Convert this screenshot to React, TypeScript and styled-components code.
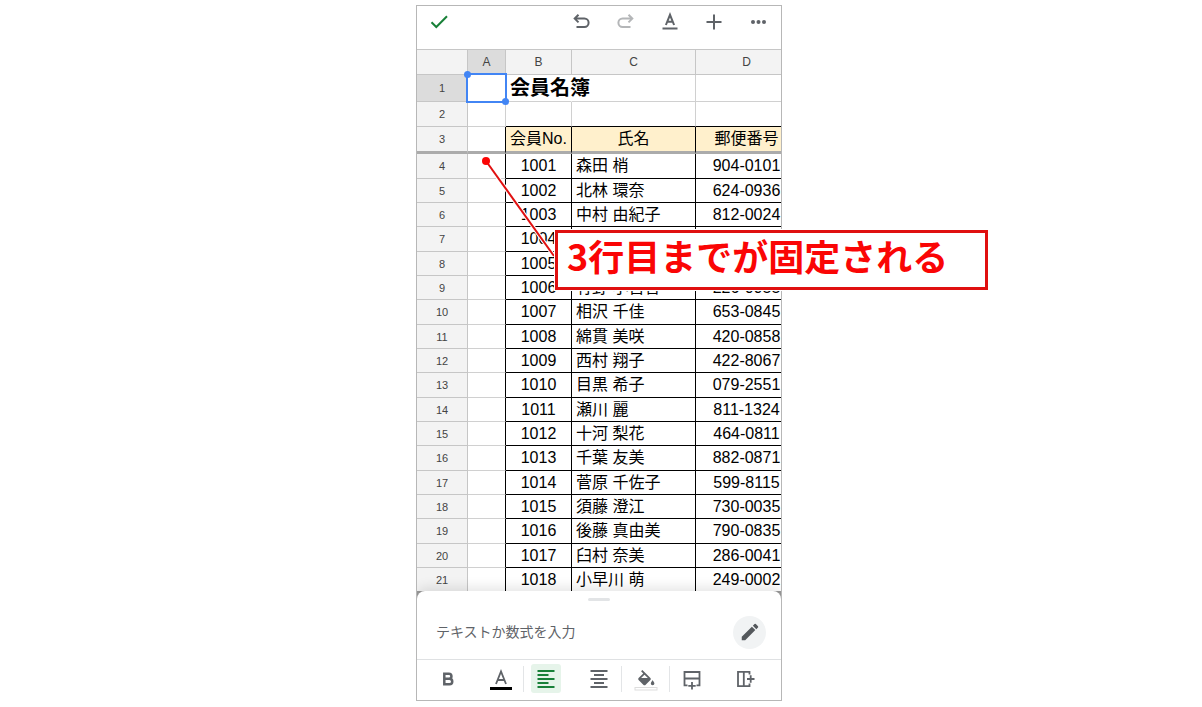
import React from "react";
import styled, { createGlobalStyle, css } from "styled-components";

const latin = `"Liberation Sans", "Noto Sans CJK JP", sans-serif`;

const GlobalStyle = createGlobalStyle`
  *, *::before, *::after { box-sizing: border-box; }
  body { margin: 0; background: #fff; font-family: ${latin}; }
  button, input { font: inherit; margin: 0; padding: 0; border: 0; background: none; }
  button { cursor: pointer; display: grid; place-items: center; }
`;

const Page = styled.main`
  display: flex;
  justify-content: center;
  padding: 5px 8px 6px 4px;
`;

const Phone = styled.section`
  position: relative;
  display: flex;
  flex-direction: column;
  width: 100%;
  max-width: 366px;
  border: 1px solid #b7b7b7;
  background: #fff;
`;

const Toolbar = styled.header`
  display: flex;
  align-items: flex-start;
  justify-content: space-between;
  height: 43px;
  padding: 4px 11px 4px 10px;
`;

const ToolGroup = styled.div`
  display: flex;
  gap: 20px;
`;

const ToolButton = styled.button<{ $color?: string }>`
  width: 24px;
  height: 24px;
  color: ${(p) => p.$color ?? "#5f6368"};
`;

const GridArea = styled.div`
  overflow: hidden;
  height: 542px;
`;

const Table = styled.table`
  table-layout: fixed;
  width: 381px;
  border-collapse: separate;
  border-spacing: 0;
  color: #000;
  font-size: 16px;
  line-height: 20px;
`;

const Col = styled.col<{ $width: number }>`
  width: ${(p) => p.$width}px;
`;

const headStyle = css<{ $active?: boolean }>`
  padding: 0;
  border: solid #c6c6c6;
  background: ${(p) => (p.$active ? "#dcdcdc" : "#f3f3f3")};
  color: #444;
  font-weight: 400;
`;

const ColumnHead = styled.th<{ $active?: boolean }>`
  ${headStyle}
  height: 26px;
  border-width: 1px 1px 1px 0;
  font-size: 12px;
`;

const RowHead = styled.th<{ $active?: boolean }>`
  ${headStyle}
  border-width: 0 1px 1px 0;
  font-size: 11px;
`;

const Cell = styled.td<{ $ruled?: boolean; $edge?: boolean; $align?: string; $open?: boolean }>`
  padding: 0 0 0 4px;
  white-space: nowrap;
  text-align: ${(p) => p.$align ?? "left"};
  border: solid #d0d0d0;
  border-width: 0 1px 1px 0;
  ${(p) => p.$align === "center" && css`padding: 0;`}
  ${(p) => p.$ruled && css`border-color: #000;`}
  ${(p) => p.$edge && css`border-right-color: #000;`}
  ${(p) => p.$open && css`border-right-color: transparent;`}
`;

const RuledTop = styled(Cell)`
  border-bottom-color: #000;
`;

const TitleCell = styled(Cell)`
  font-size: 20px;
  font-weight: 700;
  line-height: 24px;
`;

const LabelCell = styled(Cell)`
  background: #fff0cc;
`;

const SelectedCell = styled(Cell)`
  position: relative;
`;

const Selection = styled.span`
  position: absolute;
  inset: -2px;
  border: 2px solid #4285f4;
  &::before, &::after {
    content: "";
    position: absolute;
    width: 7px;
    height: 7px;
    border-radius: 50%;
    background: #4285f4;
  }
  &::before { top: -4px; left: -4px; }
  &::after { right: -4px; bottom: -4px; }
`;

const Row = styled.tr<{ $height: number }>`
  height: ${(p) => p.$height}px;
`;

const FrozenRow = styled(Row)`
  & > * {
    border-bottom: 3px solid #ababab;
  }
`;

const SheetBacking = styled.div`
  background: linear-gradient(#fff, #fff) bottom / 100% 98px no-repeat, #9a9a9a;
`;

const Sheet = styled.div`
  border-radius: 8px 8px 0 0;
  background: #fff;
  box-shadow: 0 -4px 12px rgba(0, 0, 0, 0.1);
  clip-path: inset(-20px 0 0 0);
`;

const Grip = styled.div`
  width: 22px;
  height: 3px;
  margin: 0 auto;
  border-radius: 2px;
  background: #e2e4e6;
`;

const SheetTop = styled.div`
  padding-top: 7px;
`;

const Entry = styled.form`
  display: flex;
  align-items: center;
  height: 58px;
  padding: 4px 15px 0 19px;
`;

const EntryInput = styled.input`
  flex: 1;
  min-width: 0;
  color: #5f6368;
  font-size: 14px;
  outline: 0;
  &::placeholder { color: #5f6368; opacity: 1; }
`;

const EditButton = styled.button`
  width: 33px;
  height: 33px;
  border-radius: 50%;
  background: #f1f3f4;
  color: #54585c;
`;

const FormatBar = styled.div`
  display: flex;
  align-items: center;
  height: 41px;
  padding: 0 14px 3px 9px;
  border-top: 1px solid #dfe1e3;
`;

const FormatGroup = styled.div<{ $grow?: boolean }>`
  display: flex;
  justify-content: center;
  flex: ${(p) => (p.$grow ? "1" : "none")};
  gap: 23px;
  padding: 0 7px;
`;

const FormatButton = styled.button<{ $active?: boolean }>`
  width: 30px;
  height: 29px;
  border-radius: 3px;
  color: ${(p) => (p.$active ? "#188038" : "#5f6368")};
  background: ${(p) => (p.$active ? "#e6f4ea" : "transparent")};
`;

const Divider = styled.span`
  width: 1px;
  height: 26px;
  background: #e3e5e7;
`;

const Pointer = styled.svg`
  position: absolute;
  left: 60px;
  top: 147px;
  overflow: visible;
  pointer-events: none;
`;

const Callout = styled.p`
  position: absolute;
  left: 138px;
  top: 224px;
  width: 433px;
  height: 60px;
  margin: 0;
  padding-left: 9px;
  border: 3px solid #e01010;
  outline: 1px solid #fff;
  background: #fff;
  color: #fa0505;
  font: 700 36px/44px "Noto Sans CJK JP", sans-serif;
  white-space: nowrap;
`;

const members: [string, string, string][] = [
  ["1001", "森田 梢", "904-0101"],
  ["1002", "北林 環奈", "624-0936"],
  ["1003", "中村 由紀子", "812-0024"],
  ["1004", "", ""],
  ["1005", "", ""],
  ["1006", "竹野 小百合", "226-0055"],
  ["1007", "相沢 千佳", "653-0845"],
  ["1008", "綿貫 美咲", "420-0858"],
  ["1009", "西村 翔子", "422-8067"],
  ["1010", "目黒 希子", "079-2551"],
  ["1011", "瀬川 麗", "811-1324"],
  ["1012", "十河 梨花", "464-0811"],
  ["1013", "千葉 友美", "882-0871"],
  ["1014", "菅原 千佐子", "599-8115"],
  ["1015", "須藤 澄江", "730-0035"],
  ["1016", "後藤 真由美", "790-0835"],
  ["1017", "臼村 奈美", "286-0041"],
  ["1018", "小早川 萌", "249-0002"],
];

function AlignIcon({ center }: { center?: boolean }) {
  return (
    <svg width="18" height="18" viewBox="0 0 18 18" fill="none" stroke="currentColor" strokeWidth="2" aria-hidden="true">
      <path d="M.5 1h17M.5 9h17M.5 17h17" />
      <path d={center ? "M4 5h10M4 13h10" : "M.5 5h11M.5 13h11"} />
    </svg>
  );
}

function LineIcon({ d, weight = 2 }: { d: string; weight?: number }) {
  return (
    <svg width="24" height="24" viewBox="0 0 24 24" fill="none" stroke="currentColor" strokeWidth={weight} aria-hidden="true">
      <path d={d} />
    </svg>
  );
}

export default function App() {
  return (
    <>
      <GlobalStyle />
      <Page>
        <Phone>
          <Toolbar>
            <ToolButton $color="#188038" aria-label="完了">
              <LineIcon d="M4.5 12.2l4.800 4.800L20 6.300" />
            </ToolButton>
            <ToolGroup>
              <ToolButton aria-label="元に戻す">
                <LineIcon d="M8.500 4.800L4.700 8.600l3.800 3.800M5 8.600h9.400a4.200 4.200 0 0 1 0 8.400H6.500" />
              </ToolButton>
              <ToolButton $color="#b4b6b8" aria-label="やり直す">
                <LineIcon d="M14.500 4.800l3.800 3.800-3.800 3.800M18 8.600H8.600a4.200 4.200 0 0 0 0 8.400h7.900" />
              </ToolButton>
              <ToolButton aria-label="書式">
                <LineIcon d="M7.900 15L12 4.800 16.100 15M9.200 11.800h5.600M4.500 18.500h15" />
              </ToolButton>
              <ToolButton aria-label="挿入">
                <LineIcon d="M12 4.500v15M4.500 12h15" />
              </ToolButton>
              <ToolButton aria-label="その他">
                <svg width="24" height="24" viewBox="0 0 24 24" fill="currentColor">
                  <circle cx="7" cy="12" r="2" />
                  <circle cx="12.5" cy="12" r="2" />
                  <circle cx="18" cy="12" r="2" />
                </svg>
              </ToolButton>
            </ToolGroup>
          </Toolbar>

          <GridArea>
            <Table>
              <colgroup>
                <Col $width={51} />
                <Col $width={38} />
                <Col $width={66} />
                <Col $width={124} />
                <Col $width={102} />
              </colgroup>
              <thead>
                <tr>
                  <ColumnHead />
                  <ColumnHead $active>A</ColumnHead>
                  <ColumnHead>B</ColumnHead>
                  <ColumnHead>C</ColumnHead>
                  <ColumnHead>D</ColumnHead>
                </tr>
              </thead>
              <tbody>
                <Row $height={27}>
                  <RowHead $active>1</RowHead>
                  <SelectedCell><Selection /></SelectedCell>
                  <TitleCell $open>会員名簿</TitleCell>
                  <Cell />
                  <Cell />
                </Row>
                <Row $height={25}>
                  <RowHead>2</RowHead>
                  <Cell />
                  <RuledTop />
                  <RuledTop />
                  <RuledTop />
                </Row>
                <FrozenRow $height={27}>
                  <RowHead>3</RowHead>
                  <Cell $edge />
                  <LabelCell $ruled $align="center">会員No.</LabelCell>
                  <LabelCell $ruled $align="center">氏名</LabelCell>
                  <LabelCell $ruled $align="center">郵便番号</LabelCell>
                </FrozenRow>
                {members.map(([no, name, zip], i) => (
                  <Row key={no} $height={i % 3 === 0 ? 25 : 24}>
                    <RowHead>{i + 4}</RowHead>
                    <Cell $edge />
                    <Cell $ruled $align="center">{no}</Cell>
                    <Cell $ruled>{name}</Cell>
                    <Cell $ruled $align="center">{zip}</Cell>
                  </Row>
                ))}
              </tbody>
            </Table>
          </GridArea>

          <SheetBacking>
            <Sheet>
              <SheetTop><Grip /></SheetTop>
              <Entry>
                <EntryInput aria-label="セルの内容" placeholder="テキストか数式を入力" />
                <EditButton type="button" aria-label="編集">
                  <svg width="22" height="22" viewBox="0 0 24 24" fill="currentColor">
                    <path d="M3 17.250V21h3.750L17.810 9.940l-3.750-3.750L3 17.250zM20.710 7.040a1 1 0 0 0 0-1.410l-2.340-2.340a1 1 0 0 0-1.410 0l-1.830 1.830 3.750 3.750 1.830-1.830z" />
                  </svg>
                </EditButton>
              </Entry>
              <FormatBar>
                <FormatGroup>
                  <FormatButton aria-label="太字">
                    <LineIcon weight={2.5} d="M8.300 6.700h4.600a2.500 2.500 0 0 1 0 5.100H8.300zM8.300 11.800h5.200a2.750 2.750 0 0 1 0 5.500H8.300z" />
                  </FormatButton>
                  <FormatButton aria-label="文字色">
                    <svg width="24" height="24" viewBox="0 0 24 24" fill="none" stroke="currentColor" strokeWidth="1.8">
                      <path d="M7 17L12 4.500 17 17M8.700 13h6.600" />
                      <path d="M1 21.500h22" stroke="#000" strokeWidth="3" />
                    </svg>
                  </FormatButton>
                </FormatGroup>
                <Divider />
                <FormatGroup>
                  <FormatButton $active aria-label="左揃え"><AlignIcon /></FormatButton>
                  <FormatButton aria-label="中央揃え"><AlignIcon center /></FormatButton>
                </FormatGroup>
                <Divider />
                <FormatGroup $grow>
                  <FormatButton aria-label="塗りつぶし">
                    <svg width="24" height="24" viewBox="0 0 24 24" fill="currentColor">
                      <path d="M16.560 8.940L7.620 0 6.210 1.410l2.380 2.380-5.150 5.150a1.490 1.490 0 0 0 0 2.120l5.500 5.500c.29.29.68.44 1.060.44s.77-.15 1.060-.44l5.500-5.500c.59-.58.59-1.530 0-2.120zM6.200 9L10 5.210 13.800 9zM19 11.500s-2 2.170-2 3.500a2 2 0 0 0 4 0c0-1.330-2-3.500-2-3.500z" transform="translate(1.500 3) scale(.9)" />
                      <rect x="1" y="20.5" width="22" height="2.5" fill="#fff" stroke="#ddd" />
                    </svg>
                  </FormatButton>
                </FormatGroup>
                <Divider />
                <FormatGroup>
                  <FormatButton aria-label="行を挿入">
                    <LineIcon weight={1.8} d="M7.500 18.300H4.500V5h15v13.300h-3M4.500 11.500h15M12 15v7.500M8.300 18.800h7.400" />
                  </FormatButton>
                  <FormatButton aria-label="列を挿入">
                    <LineIcon weight={1.8} d="M16.500 7.500V4.800H5v14.400h11.500v-2.700M10.800 4.800v14.400M14 12h7.500M17.700 8.300v7.400" />
                  </FormatButton>
                </FormatGroup>
              </FormatBar>
            </Sheet>
          </SheetBacking>

          <Pointer width="80" height="110" aria-hidden="true">
            <path d="M9 8L77 103" stroke="#fff" strokeWidth="4" />
            <path d="M9 8L77 103" stroke="#e01010" strokeWidth="2" />
            <circle cx="9" cy="8" r="4" fill="#fa0505" />
          </Pointer>
          <Callout>3行目までが固定される</Callout>
        </Phone>
      </Page>
    </>
  );
}
